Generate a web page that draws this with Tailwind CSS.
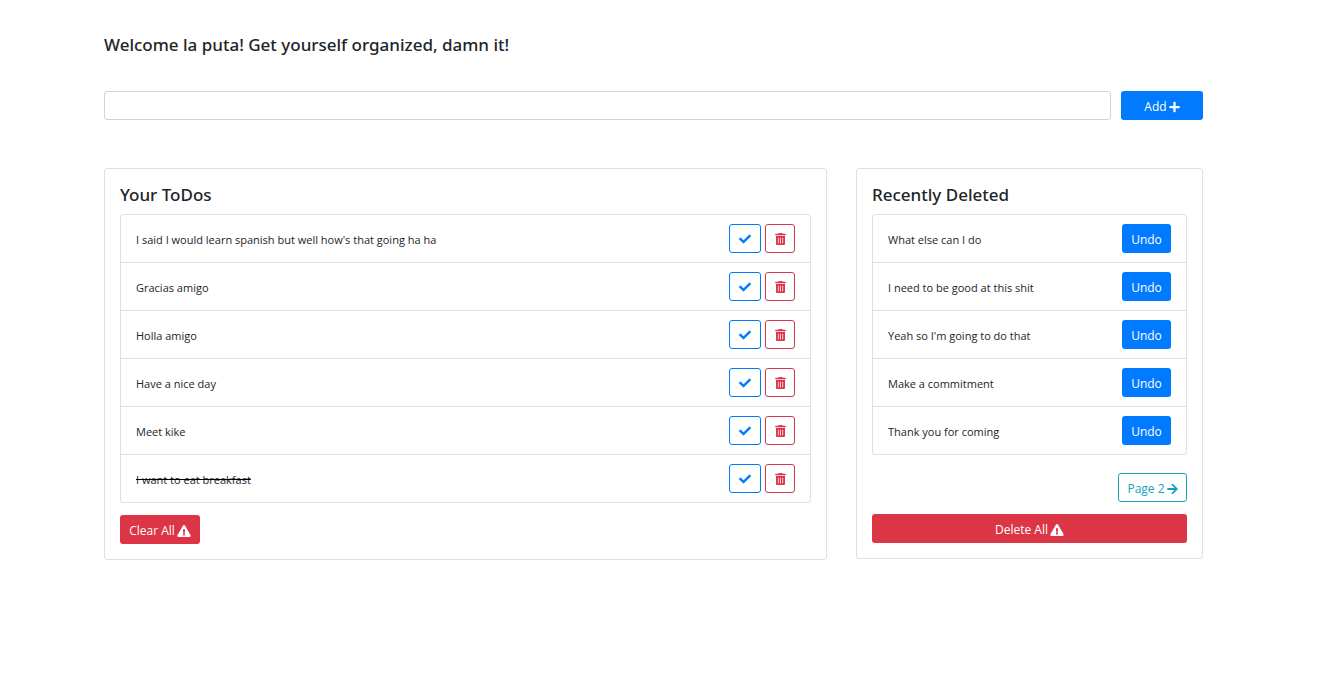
<!DOCTYPE html>
<html lang="en">
<head>
<meta charset="utf-8">
<meta name="viewport" content="width=device-width, initial-scale=1">
<title>ToDos</title>
<script src="https://cdn.jsdelivr.net/npm/@tailwindcss/browser@4"></script>
</head>
<body class="bg-white font-['Open_Sans','Noto_Sans',sans-serif] text-xs text-[#212529]">
<svg class="hidden" aria-hidden="true">
  <symbol id="plus" viewBox="0 0 448 512"><path d="M416 208H272V64c0-17.670-14.330-32-32-32h-32c-17.670 0-32 14.330-32 32v144H32c-17.670 0-32 14.330-32 32v32c0 17.670 14.330 32 32 32h144v144c0 17.670 14.330 32 32 32h32c17.670 0 32-14.330 32-32V304h144c17.670 0 32-14.330 32-32v-32c0-17.670-14.330-32-32-32z"/></symbol>
  <symbol id="check" viewBox="0 0 512 512"><path d="M173.898 439.404l-166.400-166.400c-9.997-9.997-9.997-26.206 0-36.204l36.203-36.204c9.997-9.998 26.207-9.998 36.204 0L192 312.690 432.095 72.596c9.997-9.997 26.207-9.997 36.204 0l36.203 36.204c9.997 9.997 9.997 26.206 0 36.204l-294.400 294.401c-9.998 9.997-26.207 9.997-36.204-.001z"/></symbol>
  <symbol id="trash" viewBox="0 0 448 512"><path d="M32 464a48 48 0 0 0 48 48h288a48 48 0 0 0 48-48V128H32zm272-256a16 16 0 0 1 32 0v224a16 16 0 0 1-32 0zm-96 0a16 16 0 0 1 32 0v224a16 16 0 0 1-32 0zm-96 0a16 16 0 0 1 32 0v224a16 16 0 0 1-32 0zM432 32H312l-9.400-18.700A24 24 0 0 0 281.100 0H166.800a23.720 23.720 0 0 0-21.400 13.300L136 32H16A16 16 0 0 0 0 48v32a16 16 0 0 0 16 16h416a16 16 0 0 0 16-16V48a16 16 0 0 0-16-16z"/></symbol>
  <symbol id="arrow" viewBox="0 0 448 512"><path d="M190.500 66.900l22.200-22.200c9.400-9.400 24.600-9.400 33.900 0L441 239c9.400 9.400 9.400 24.600 0 33.900L246.600 467.300c-9.400 9.400-24.600 9.400-33.900 0l-22.200-22.200c-9.500-9.500-9.300-25 .4-34.300L311.400 296H24c-13.300 0-24-10.700-24-24v-32c0-13.300 10.700-24 24-24h287.400L190.900 101.200c-9.800-9.300-10-24.800-.4-34.300z"/></symbol>
  <symbol id="warn" viewBox="0 0 576 512"><path d="M569.517 440.013C587.975 472.007 564.806 512 527.940 512H48.054c-36.937 0-59.999-40.055-41.577-71.987L246.423 23.985c18.467-32.009 64.720-31.951 83.154 0l239.940 416.028zM288 354c-25.405 0-46 20.595-46 46s20.595 46 46 46 46-20.595 46-46-20.595-46-46-46zm-43.673-165.346l7.418 136c.347 6.364 5.609 11.346 11.982 11.346h48.546c6.373 0 11.635-4.982 11.982-11.346l7.418-136c.375-6.874-5.098-12.654-11.982-12.654h-63.383c-6.884 0-12.356 5.780-11.981 12.654z"/></symbol>
</svg>
<main class="pt-[34px] pr-[141px] pb-8 pl-[104px]">
  <h1 class="font-['Noto_Sans','Open_Sans',sans-serif] text-[17px]/[22px] font-medium">Welcome la puta! Get yourself organized, damn it!</h1>
  <form class="mt-[35px] flex gap-[10px]">
    <input type="text" aria-label="New todo" class="h-[29px] min-w-0 flex-1 rounded-[3px] border border-[#ced4da] px-2">
    <button type="button" class="flex h-[29px] w-[82px] items-center justify-center gap-[2px] rounded-[3px] bg-[#007bff] pt-[2px] text-white">Add <svg class="h-3 w-[11px] fill-current" aria-hidden="true"><use href="#plus"/></svg></button>
  </form>
  <div class="mt-12 grid grid-cols-[723fr_347fr] items-start gap-[29px]">
    <section class="rounded-[3px] border border-[#dfdfdf] p-[15px]">
      <h2 class="mb-2 font-['Noto_Sans','Open_Sans',sans-serif] text-[17px]/[22px] font-medium">Your ToDos</h2>
      <ul id="todos" class="divide-y divide-[#dfdfdf] rounded-[3px] border border-[#dfdfdf]"></ul>
      <button type="button" class="mt-3 flex h-[29px] w-20 items-center justify-center gap-[2px] rounded-[3px] bg-[#dc3545] pt-[2px] text-white">Clear All <svg class="h-3 w-[14px] fill-current" aria-hidden="true"><use href="#warn"/></svg></button>
    </section>
    <section class="rounded-[3px] border border-[#dfdfdf] p-[15px]">
      <h2 class="mb-2 font-['Noto_Sans','Open_Sans',sans-serif] text-[17px]/[22px] font-medium">Recently Deleted</h2>
      <ul id="deleted" class="divide-y divide-[#dfdfdf] rounded-[3px] border border-[#dfdfdf]"></ul>
      <button type="button" class="mt-[18px] ml-auto flex h-[29px] w-[69px] items-center justify-center gap-[2px] rounded-[3px] border border-[#17a2b8] pt-[2px] text-[#17a2b8]">Page 2 <svg class="h-3 w-[11px] fill-current" aria-hidden="true"><use href="#arrow"/></svg></button>
      <button type="button" class="mt-3 flex h-[29px] w-full items-center justify-center gap-[2px] rounded-[3px] bg-[#dc3545] pt-[2px] text-white">Delete All <svg class="h-3 w-[14px] fill-current" aria-hidden="true"><use href="#warn"/></svg></button>
    </section>
  </div>
</main>
<script>
const todos = ["I said I would learn spanish but well how's that going ha ha", "Gracias amigo", "Holla amigo", "Have a nice day", "Meet kike", "I want to eat breakfast"];
const deleted = ["What else can I do", "I need to be good at this shit", "Yeah so I'm going to do that", "Make a commitment", "Thank you for coming"];
document.getElementById("todos").innerHTML = todos.map((t, i) => `
  <li class="flex items-center gap-1 px-[15px] py-[9px]">
    <span class="${i === 5 ? "mr-auto pt-[3px] text-[11px] line-through decoration-black" : "mr-auto pt-[3px] text-[11px]"}">${t}</span>
    <button type="button" aria-label="Complete" class="flex h-[29px] w-8 items-center justify-center rounded-[3px] border border-[#007bff] pt-px text-[#007bff]"><svg class="size-3 fill-current" aria-hidden="true"><use href="#check"/></svg></button>
    <button type="button" aria-label="Delete" class="flex h-[29px] w-[30px] items-center justify-center rounded-[3px] border border-[#dc3545] pt-px text-[#dc3545]"><svg class="h-3 w-[11px] fill-current" aria-hidden="true"><use href="#trash"/></svg></button>
  </li>`).join("");
document.getElementById("deleted").innerHTML = deleted.map(t => `
  <li class="flex items-center justify-between px-[15px] py-[9px]">
    <span class="pt-[3px] text-[11px]">${t}</span>
    <button type="button" class="h-[29px] w-[49px] rounded-[3px] bg-[#007bff] pt-[2px] text-white">Undo</button>
  </li>`).join("");
</script>
</body>
</html>
